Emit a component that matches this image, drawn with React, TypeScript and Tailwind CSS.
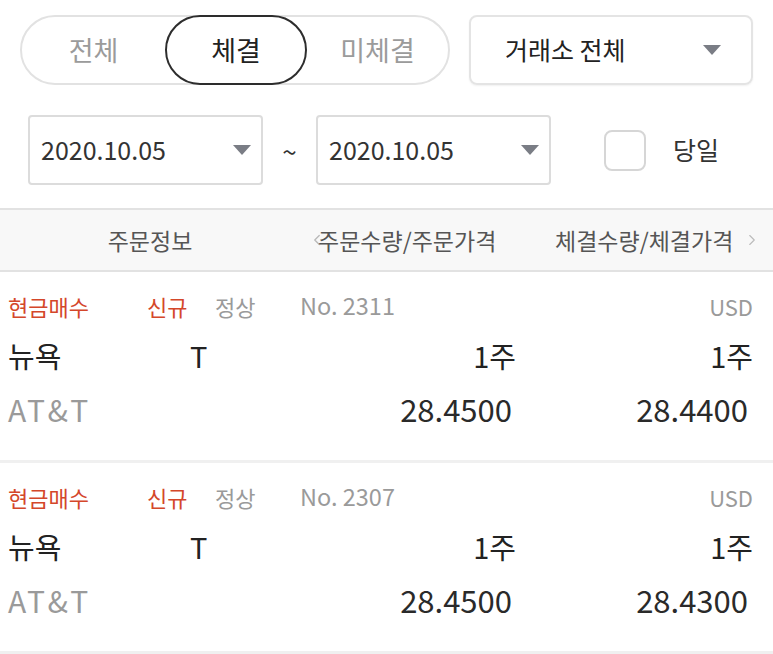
import { ChevronLeft, ChevronRight } from 'lucide-react';

const font = { fontFamily: '"Noto Sans CJK KR", "Noto Sans", sans-serif' };

// 드롭다운 삼각형
const Caret = () => (
  <svg width="18" height="10" viewBox="0 0 18 10">
    <path d="M0 0 L18 0 L9 10 Z" fill="#7a7d85" />
  </svg>
);

type Order = {
  no: string;
  qty: string;
  price: string;
  filledQty: string;
  filledPrice: string;
};

const orders: Order[] = [
  { no: 'No. 2311', qty: '1주', price: '28.4500', filledQty: '1주', filledPrice: '28.4400' },
  { no: 'No. 2307', qty: '1주', price: '28.4500', filledQty: '1주', filledPrice: '28.4300' },
];

const OrderRow = ({ order }: { order: Order }) => (
  <div className="h-[191px] border-b-[3px] border-[#f0f0f0] pt-[17px]">
    <div className="flex h-[34px] items-center pl-[8px] pr-[20px] text-[22px]">
      <span className="w-[139px] text-[#d4472a]">현금매수</span>
      <span className="w-[68px] text-[#d4472a]">신규</span>
      <span className="w-[85px] text-[#9a9a9a]">정상</span>
      <span className="text-[23.5px] text-[#9a9a9a]">{order.no}</span>
      <span className="ml-auto text-[#9a9a9a]">USD</span>
    </div>
    <div className="mt-[13px] flex h-[40px] items-center pl-[8px] pr-[20px] text-[29px] text-[#222]">
      <span className="w-[182px]">뉴욕</span>
      <span className="w-[20px]">T</span>
      <span className="w-[306px] text-right">{order.qty}</span>
      <span className="flex-1 text-right">{order.filledQty}</span>
    </div>
    <div className="mt-[12px] flex h-[42px] items-center pl-[8px] pr-[25px] text-[31px]">
      <span className="text-[30px] tracking-[2.5px] text-[#9a9a9a]">AT&amp;T</span>
      <span className="ml-auto text-[#2a2a2a]">{order.price}</span>
      <span className="w-[236px] text-right text-[#2a2a2a]">{order.filledPrice}</span>
    </div>
  </div>
);

export default function App() {
  return (
    <div className="h-[654px] w-[773px] overflow-hidden bg-white" style={font}>
      {/* 상단 필터 */}
      <div className="flex items-center gap-[19px] pl-[20px] pr-[20px] pt-[15px]">
        <div className="flex h-[70px] w-[430px] items-center rounded-full border-2 border-[#e2e2e2] text-[27px]">
          <span className="w-[143px] text-center text-[#9b9b9b]">전체</span>
          <span className="flex h-[70px] w-[142px] items-center justify-center rounded-full border-2 border-[#2d2d2d] text-[#222]">
            체결
          </span>
          <span className="flex-1 text-center text-[#9b9b9b]">미체결</span>
        </div>
        <div className="flex h-[70px] flex-1 items-center justify-between rounded-[8px] border-2 border-[#e4e4e4] pl-[34px] pr-[30px] shadow-[0_1px_2px_rgba(0,0,0,0.06)]">
          <span className="text-[25px] text-[#222]">거래소 전체</span>
          <Caret />
        </div>
      </div>

      {/* 기간 선택 */}
      <div className="mt-[30px] flex items-center pl-[28px]">
        <div className="flex h-[70px] w-[235px] items-center justify-between rounded-[4px] border-2 border-[#dcdcdc] pl-[11px] pr-[10px]">
          <span className="text-[25px] text-[#333]">2020.10.05</span>
          <Caret />
        </div>
        <span className="w-[53px] text-center text-[26px] text-[#333]">~</span>
        <div className="flex h-[70px] w-[235px] items-center justify-between rounded-[4px] border-2 border-[#dcdcdc] pl-[11px] pr-[10px]">
          <span className="text-[25px] text-[#333]">2020.10.05</span>
          <Caret />
        </div>
        <div className="ml-[53px] h-[41px] w-[42px] rounded-[8px] border-2 border-[#d6d6d6]" />
        <span className="ml-[27px] text-[25px] text-[#333]">당일</span>
      </div>

      {/* 헤더 */}
      <div className="mt-[23px] flex h-[64px] items-center border-y-2 border-[#e2e2e2] bg-[#f8f8f8] text-[23px] text-[#555]">
        <span className="w-[300px] text-center">주문정보</span>
        <span className="flex w-[255px] items-center">
          <ChevronLeft className="-mr-[8px] ml-[8px] shrink-0 text-[#b8b8b8]" size={18} strokeWidth={1.75} />
          <span>주문수량/주문가격</span>
        </span>
        <span className="flex items-center">
          체결수량/체결가격
          <ChevronRight className="ml-[10px] text-[#bbb]" size={18} strokeWidth={1.5} />
        </span>
      </div>

      {orders.map((o) => (
        <OrderRow key={o.no} order={o} />
      ))}
    </div>
  );
}
